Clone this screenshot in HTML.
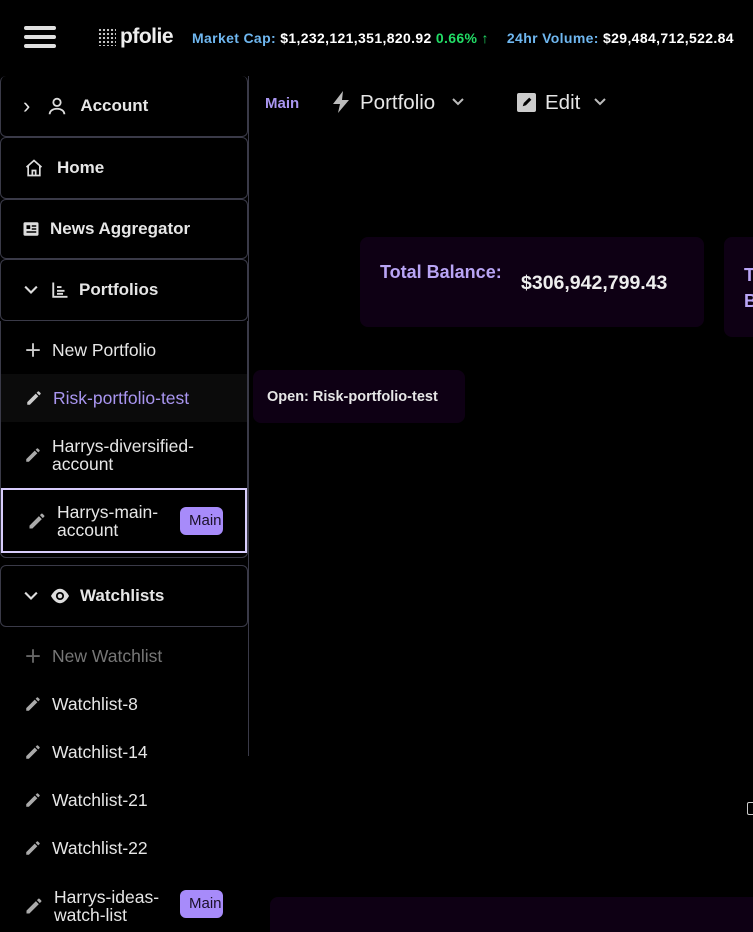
<!DOCTYPE html>
<html><head><meta charset="utf-8"><style>
*{box-sizing:border-box;margin:0;padding:0}
html,body{width:753px;height:932px;overflow:hidden}
body{background:#000;color:#e8e8e8;font-family:"Liberation Sans",sans-serif;position:relative}
.a{position:absolute}
.hb{left:24px;width:32px;height:4px;background:#e0e0e0;border-radius:2px}
.box{position:absolute;left:0;width:248px;border:1px solid #3a3a48;border-radius:6px;display:flex;align-items:center;font-weight:bold;font-size:17px;color:#e6e6e6}
.it{position:absolute;left:0;width:246px;display:flex;align-items:center;font-size:17.5px;color:#e6e6e6;padding-left:24px}
.it svg{margin-right:10px;flex:none}
.badge{position:absolute;background:#a78bfa;color:#1a1028;font-size:15px;border-radius:6px;padding:5px 0 5px 9px;width:43px;overflow:hidden;white-space:nowrap}
.card{position:absolute;background:#0e0014;border-radius:8px}
</style></head><body>
<div class="a hb" style="top:26px"></div><div class="a hb" style="top:35px"></div><div class="a hb" style="top:44px"></div>
<div class="a" style="left:98px;top:28px;width:18px;height:18px;background:radial-gradient(circle,#ccc 1px,transparent 1.3px) 0 0/4px 4px"></div>
<div class="a" style="left:120px;top:25px;font-size:21px;font-weight:bold;color:#eee;letter-spacing:-0.5px">pfolie</div>
<div class="a" style="left:192px;top:30px;font-size:14px;font-weight:bold;white-space:nowrap;letter-spacing:0.35px"><span style="color:#6fb7f0">Market Cap:</span> <span style="color:#fff">$1,232,121,351,820.92</span> <span style="color:#22dd66">0.66% ↑</span><span style="color:#6fb7f0;margin-left:18px">24hr Volume:</span> <span style="color:#fff">$29,484,712,522.84</span></div>

<div class="a" style="left:248px;top:76px;width:1px;height:680px;background:#3a3a48"></div>
<div class="box" style="top:76px;height:61px;border-top:none;padding-left:22px"><span style="font-weight:normal;font-size:22px;margin-right:16px">›</span><svg width="22" height="22" viewBox="0 0 24 24" fill="none" stroke="#ddd" stroke-width="2"><circle cx="12" cy="8" r="4"/><path d="M4 21c0-4 4-6 8-6s8 2 8 6"/></svg><span style="margin-left:12px">Account</span></div>
<div class="box" style="top:137px;height:62px;padding-left:22px"><svg width="22" height="20" viewBox="0 0 24 24" fill="none" stroke="#ddd" stroke-width="2"><path d="M3 11l9-8 9 8M5 9v12h14V9M10 21v-6h4v6"/></svg><span style="margin-left:12px">Home</span></div>
<div class="box" style="top:199px;height:60px;padding-left:20px"><svg width="20" height="18" viewBox="0 0 24 24" fill="#ddd"><rect x="2" y="3" width="20" height="18" rx="2"/><rect x="6" y="7" width="5" height="5" fill="#000"/><rect x="13" y="7" width="6" height="2" fill="#000"/><rect x="13" y="11" width="6" height="2" fill="#000"/><rect x="6" y="15" width="13" height="2" fill="#000"/></svg><span style="margin-left:9px">News Aggregator</span></div>
<div class="box" style="top:259px;height:62px;padding-left:20px"><svg width="20" height="20" viewBox="0 0 24 24" fill="none" stroke="#ddd" stroke-width="2.5"><path d="M5 8l7 7 7-7"/></svg><svg style="margin-left:10px" width="18" height="18" viewBox="0 0 24 24" fill="none" stroke="#ddd" stroke-width="2.5"><path d="M3 2v19h19M8 8h6M8 13h10M8 17h8"/></svg><span style="margin-left:10px">Portfolios</span></div>
<div class="a" style="left:0;top:321px;width:248px;height:237px;border:1px solid #3a3a48;border-top:none;border-radius:0 0 6px 6px"></div>

<div class="it" style="top:326px;height:48px"><svg width="18" height="18" viewBox="0 0 24 24" stroke="#ccc" stroke-width="2.5"><path d="M12 3v18M3 12h18"/></svg>New Portfolio</div>
<div class="it" style="top:374px;height:48px;background:#0b0b0b;color:#a996f0;left:1px"><svg width="18" height="18" viewBox="0 0 24 24" fill="#ccc"><path d="M3 17.5V21h3.5L17.8 9.7l-3.5-3.5zM20.7 6.8a1 1 0 000-1.4l-2.1-2.1a1 1 0 00-1.4 0l-1.7 1.7 3.5 3.5z"/></svg>Risk-portfolio-test</div>
<div class="it" style="top:422px;height:66px;line-height:18px"><svg width="18" height="18" viewBox="0 0 24 24" fill="#aaa"><path d="M3 17.5V21h3.5L17.8 9.7l-3.5-3.5zM20.7 6.8a1 1 0 000-1.4l-2.1-2.1a1 1 0 00-1.4 0l-1.7 1.7 3.5 3.5z"/></svg><span>Harrys-diversified-<br>account</span></div>
<div class="it" style="top:488px;height:65px;left:1px;width:246px;border:2px solid #d8cdfc;line-height:18px"><svg width="20" height="20" viewBox="0 0 24 24" fill="#aaa"><path d="M3 17.5V21h3.5L17.8 9.7l-3.5-3.5zM20.7 6.8a1 1 0 000-1.4l-2.1-2.1a1 1 0 00-1.4 0l-1.7 1.7 3.5 3.5z"/></svg><span>Harrys-main-<br>account</span><div class="badge" style="left:177px;top:17px">Main</div></div>

<div class="box" style="top:565px;height:62px;padding-left:20px"><svg width="20" height="20" viewBox="0 0 24 24" fill="none" stroke="#ddd" stroke-width="2.5"><path d="M5 8l7 7 7-7"/></svg><svg style="margin-left:8px" width="22" height="18" viewBox="0 0 24 20" fill="#ddd"><path d="M12 2C6 2 2 10 2 10s4 8 10 8 10-8 10-8-4-8-10-8z"/><circle cx="12" cy="10" r="4.5" fill="#000"/><circle cx="12" cy="10" r="2.5" fill="#ddd"/></svg><span style="margin-left:9px">Watchlists</span></div>
<div class="it" style="top:632px;height:48px;color:#777"><svg width="18" height="18" viewBox="0 0 24 24" stroke="#666" stroke-width="2.5"><path d="M12 3v18M3 12h18"/></svg>New Watchlist</div>
<div class="it" style="top:680px;height:48px"><svg width="18" height="18" viewBox="0 0 24 24" fill="#aaa"><path d="M3 17.5V21h3.5L17.8 9.7l-3.5-3.5zM20.7 6.8a1 1 0 000-1.4l-2.1-2.1a1 1 0 00-1.4 0l-1.7 1.7 3.5 3.5z"/></svg>Watchlist-8</div>
<div class="it" style="top:728px;height:48px"><svg width="18" height="18" viewBox="0 0 24 24" fill="#aaa"><path d="M3 17.5V21h3.5L17.8 9.7l-3.5-3.5zM20.7 6.8a1 1 0 000-1.4l-2.1-2.1a1 1 0 00-1.4 0l-1.7 1.7 3.5 3.5z"/></svg>Watchlist-14</div>
<div class="it" style="top:776px;height:48px"><svg width="18" height="18" viewBox="0 0 24 24" fill="#aaa"><path d="M3 17.5V21h3.5L17.8 9.7l-3.5-3.5zM20.7 6.8a1 1 0 000-1.4l-2.1-2.1a1 1 0 00-1.4 0l-1.7 1.7 3.5 3.5z"/></svg>Watchlist-21</div>
<div class="it" style="top:824px;height:48px"><svg width="18" height="18" viewBox="0 0 24 24" fill="#aaa"><path d="M3 17.5V21h3.5L17.8 9.7l-3.5-3.5zM20.7 6.8a1 1 0 000-1.4l-2.1-2.1a1 1 0 00-1.4 0l-1.7 1.7 3.5 3.5z"/></svg>Watchlist-22</div>
<div class="it" style="top:876px;height:60px;line-height:18px"><svg width="20" height="20" viewBox="0 0 24 24" fill="#aaa"><path d="M3 17.5V21h3.5L17.8 9.7l-3.5-3.5zM20.7 6.8a1 1 0 000-1.4l-2.1-2.1a1 1 0 00-1.4 0l-1.7 1.7 3.5 3.5z"/></svg><span>Harrys-ideas-<br>watch-list</span><div class="badge" style="left:180px;top:14px">Main</div></div>

<div class="a" style="left:265px;top:95px;font-size:15px;font-weight:bold;color:#a996f0">Main</div>
<svg class="a" style="left:332px;top:91px" width="18" height="22" viewBox="0 0 18 22" fill="#bbb"><path d="M11 0L1 13h7l-2 9 11-13h-7z"/></svg>
<div class="a" style="left:360px;top:91px;font-size:20.5px;color:#e6e6e6">Portfolio</div>
<svg class="a" style="left:451px;top:97px" width="14" height="10" viewBox="0 0 14 10" fill="none" stroke="#bbb" stroke-width="2"><path d="M2 2l5 5 5-5"/></svg>
<div class="a" style="left:517px;top:93px;width:19px;height:19px;background:#ccc;border-radius:2px"></div>
<svg class="a" style="left:520px;top:96px" width="13" height="13" viewBox="0 0 24 24" fill="#000"><path d="M5 19l2-6 10-10 4 4-10 10z"/></svg>
<div class="a" style="left:545px;top:91px;font-size:20.5px;color:#e6e6e6">Edit</div>
<svg class="a" style="left:593px;top:97px" width="14" height="10" viewBox="0 0 14 10" fill="none" stroke="#bbb" stroke-width="2"><path d="M2 2l5 5 5-5"/></svg>

<div class="card" style="left:360px;top:237px;width:344px;height:90px"></div>
<div class="a" style="left:380px;top:262px;font-size:18px;font-weight:bold;color:#b9a5f5">Total Balance:</div>
<div class="a" style="left:521px;top:272px;font-size:19.5px;font-weight:bold;color:#eee">$306,942,799.43</div>
<div class="card" style="left:724px;top:237px;width:40px;height:100px"></div>
<div class="a" style="left:744px;top:262px;font-size:18px;font-weight:bold;color:#b9a5f5;line-height:26px">T<br>B</div>

<div class="card" style="left:253px;top:370px;width:212px;height:53px;background:#0e0014"></div>
<div class="a" style="left:267px;top:389px;font-size:14.5px;font-weight:bold;color:#e6e6e6">Open: Risk-portfolio-test</div>

<div class="a" style="left:747px;top:802px;width:8px;height:13px;border:1.5px solid #ccc;border-radius:2px"></div>
<div class="card" style="left:270px;top:897px;width:500px;height:35px;border-radius:8px 0 0 0"></div>
</body></html>
